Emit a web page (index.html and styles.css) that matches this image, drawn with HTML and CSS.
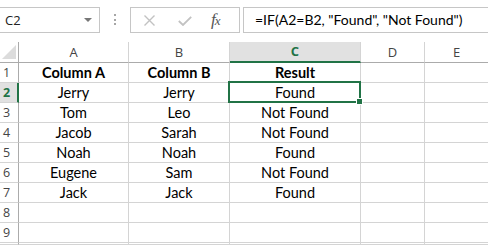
FILE: index.html
```html
<!DOCTYPE html>
<html>
<head>
<meta charset="utf-8">
<link rel="stylesheet" href="styles.css">
</head>
<body>
<div class="topbar">
  <div class="namebox">
    <span class="nb-text">C2</span>
    <svg class="nb-arrow" width="8" height="4" viewBox="0 0 8 4"><path d="M0 0H8L4 4Z" fill="#777"/></svg>
  </div>
  <div class="grip">
    <svg width="3" height="12" viewBox="0 0 3 12"><rect x="0" y="0" width="2" height="2" fill="#a6a6a6"/><rect x="0" y="5" width="2" height="2" fill="#a6a6a6"/><rect x="0" y="9" width="2" height="2" fill="#a6a6a6"/></svg>
  </div>
  <div class="fxbox">
    <svg class="btn-x" width="11" height="11" viewBox="0 0 11 11"><path d="M0.5 0.5L10.5 10.5M10.5 0.5L0.5 10.5" stroke="#c2c2c2" stroke-width="1.4"/></svg>
    <svg class="btn-ok" width="14" height="10" viewBox="0 0 14 10"><path d="M0.8 5L5 9L13.2 0.8" fill="none" stroke="#c2c2c2" stroke-width="1.8"/></svg>
    <span class="btn-fx">f<span class="fx-x">x</span></span>
  </div>
  <div class="formula">=IF(A2=B2, "Found", "Not Found")</div>
</div>
<div class="sheet">
  <div class="corner"></div>
  <div class="colhead">A</div>
  <div class="colhead">B</div>
  <div class="colhead sel">C</div>
  <div class="colhead">D</div>
  <div class="colhead">E</div>

  <div class="rowhead">1</div>
  <div class="cell bold">Column A</div>
  <div class="cell bold">Column B</div>
  <div class="cell bold">Result</div>
  <div class="cell"></div>
  <div class="cell"></div>

  <div class="rowhead sel">2</div>
  <div class="cell">Jerry</div>
  <div class="cell">Jerry</div>
  <div class="cell active">Found<span class="handle"></span></div>
  <div class="cell"></div>
  <div class="cell"></div>

  <div class="rowhead">3</div>
  <div class="cell">Tom</div>
  <div class="cell">Leo</div>
  <div class="cell">Not Found</div>
  <div class="cell"></div>
  <div class="cell"></div>

  <div class="rowhead">4</div>
  <div class="cell">Jacob</div>
  <div class="cell">Sarah</div>
  <div class="cell">Not Found</div>
  <div class="cell"></div>
  <div class="cell"></div>

  <div class="rowhead">5</div>
  <div class="cell">Noah</div>
  <div class="cell">Noah</div>
  <div class="cell">Found</div>
  <div class="cell"></div>
  <div class="cell"></div>

  <div class="rowhead">6</div>
  <div class="cell">Eugene</div>
  <div class="cell">Sam</div>
  <div class="cell">Not Found</div>
  <div class="cell"></div>
  <div class="cell"></div>

  <div class="rowhead">7</div>
  <div class="cell">Jack</div>
  <div class="cell">Jack</div>
  <div class="cell">Found</div>
  <div class="cell"></div>
  <div class="cell"></div>

  <div class="rowhead">8</div>
  <div class="cell"></div>
  <div class="cell"></div>
  <div class="cell"></div>
  <div class="cell"></div>
  <div class="cell"></div>

  <div class="rowhead">9</div>
  <div class="cell"></div>
  <div class="cell"></div>
  <div class="cell"></div>
  <div class="cell"></div>
  <div class="cell"></div>

  <div class="rowhead"></div>
  <div class="cell"></div>
  <div class="cell"></div>
  <div class="cell"></div>
  <div class="cell"></div>
  <div class="cell"></div>
</div>
</body>
</html>
```
FILE: styles.css
```css
* { box-sizing: border-box; }
html, body { margin: 0; padding: 0; background: #fff; overflow: hidden; }
body { width: 488px; height: 245px; font-family: Lato, "Open Sans", sans-serif; color: #000; }

.topbar {
  height: 42px;
  padding-top: 7px;
  display: flex;
  align-items: flex-start;
  margin-left: -1px;
}
.namebox {
  width: 101px;
  height: 26px;
  border: 1px solid #c6c6c6;
  display: flex;
  align-items: center;
  justify-content: space-between;
  padding: 0 7px 0 5px;
}
.nb-text { font-family: "Open Sans", sans-serif; font-size: 13px; color: #222; }
.grip {
  width: 30px;
  height: 26px;
  display: flex;
  align-items: center;
  justify-content: center;
}
.fxbox {
  width: 110px;
  height: 26px;
  border: 1px solid #c6c6c6;
  display: flex;
  align-items: center;
  padding-left: 13px;
}
.btn-x { margin-right: 23px; }
.btn-ok { margin-right: 19px; margin-top: 2px; }
.btn-fx {
  font-family: "Liberation Serif", serif;
  font-style: italic;
  font-size: 17px;
  color: #555;
  letter-spacing: -1px;
}
.fx-x { font-size: 13px; }
.formula {
  flex: 1;
  margin-left: 3px;
  height: 26px;
  border: 1px solid #c6c6c6;
  border-right: none;
  padding-left: 11px;
  font-size: 14px;
  line-height: 24px;
  white-space: nowrap;
}

.sheet {
  display: grid;
  grid-template-columns: 19px 110px 101px 131px 64px 64px;
  grid-template-rows: 21px repeat(9, 20px) 2px;
}
.corner {
  border-right: 1px solid #ababab;
  border-bottom: 1px solid #ababab;
  position: relative;
}
.corner::after {
  content: "";
  position: absolute;
  right: 2px;
  bottom: 3px;
  width: 0;
  height: 0;
  border-left: 14px solid transparent;
  border-bottom: 14px solid #dcdcdc;
}
.colhead {
  border-right: 1px solid #d4d4d4;
  border-bottom: 1px solid #ababab;
  font-family: "Open Sans", sans-serif;
  font-size: 13px;
  color: #444;
  text-align: center;
  line-height: 20px;
}
.colhead.sel {
  background: #e1e1e1;
  border-bottom: 2px solid #217346;
  color: #217346;
  font-weight: bold;
  line-height: 19px;
}
.rowhead {
  border-right: 1px solid #ababab;
  border-bottom: 1px solid #d4d4d4;
  font-family: "Open Sans", sans-serif;
  font-size: 12.5px;
  color: #444;
  padding-left: 3px;
  line-height: 20px;
  overflow: hidden;
}
.rowhead.sel {
  background: #e1e1e1;
  border-right: 2px solid #217346;
  color: #217346;
  font-weight: bold;
}
.cell {
  border-right: 1px solid #d4d4d4;
  border-bottom: 1px solid #d4d4d4;
  text-align: center;
  font-size: 14.5px;
  line-height: 20px;
  white-space: nowrap;
  position: relative;
}
.cell.bold { font-weight: bold; }
.cell.active::after {
  content: "";
  position: absolute;
  left: -2px;
  top: -2px;
  right: -1px;
  bottom: -1px;
  border: 2px solid #217346;
}
.handle {
  position: absolute;
  right: -3px;
  bottom: -3px;
  width: 7px;
  height: 7px;
  background: #217346;
  border: 1px solid #fff;
  z-index: 2;
}
```
